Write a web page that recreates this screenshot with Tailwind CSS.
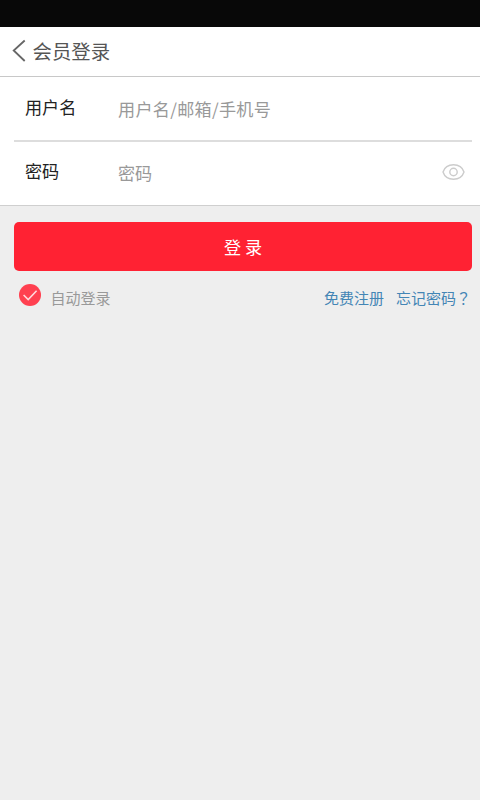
<!DOCTYPE html>
<html lang="zh-CN">
<head>
<meta charset="utf-8">
<meta name="viewport" content="width=device-width, initial-scale=1">
<title>会员登录</title>
<script src="https://cdn.jsdelivr.net/npm/@tailwindcss/browser@4"></script>
</head>
<body class="flex h-screen flex-col overflow-hidden bg-[#eeeeee] font-['Noto_Sans_CJK_SC',sans-serif]">
<div class="h-[27px] shrink-0 bg-[#080808]"></div>
<header class="flex h-[50px] shrink-0 items-center border-b border-[#c8c8c8] bg-white pl-3">
  <svg class="-mt-px h-6 w-[14px] shrink-0" viewBox="0 0 14 24" fill="none" stroke="#666666" stroke-width="1.8"><path d="M12.700 1.500 1.700 11.500l11 10.500"/></svg>
  <h1 class="-mt-px ml-[6.500px] text-[19.4px] leading-7 text-[#555555]">会员登录</h1>
</header>
<main>
  <form>
    <div class="h-[129px] border-b border-[#cfcfcf] bg-white pl-[14px] pr-2">
      <div class="flex h-[65px] border-b-2 border-[#dddddd] pl-[11px]">
        <label class="w-[93px] pt-[18px] text-[17.1px] leading-6 text-[#222222]">用户名</label>
        <span class="pt-5 text-[17.1px] leading-6 tracking-[0.3px] text-[#999999]">用户名/邮箱/手机号</span>
      </div>
      <div class="flex h-[63px] pl-[11px]">
        <label class="w-[93px] pt-[17px] text-[17.1px] leading-6 text-[#222222]">密码</label>
        <span class="pt-[19px] text-[17.1px] leading-6 text-[#999999]">密码</span>
        <svg class="ml-auto mr-[7px] mt-[22px] h-4 w-[23px]" viewBox="0 0 23 16" fill="none" stroke="#cccccc" stroke-width="1.4"><path d="M1 8C2.500 3.500 6.500 .8 11.500 .8S20.500 3.500 22 8C20.500 12.500 16.500 15.200 11.500 15.200S2.500 12.500 1 8Z"/><circle cx="11.5" cy="8" r="3.7"/></svg>
      </div>
    </div>
    <div class="pl-[14px] pr-2 pt-4">
      <button type="button" class="block h-[49px] w-full rounded-[5px] bg-[#ff2233] text-[17.1px] leading-6 text-white">登 录</button>
      <div class="flex items-start pl-[5px] pt-[13px] text-[15px] leading-5">
        <svg class="h-[22px] w-[22px]" viewBox="0 0 22 22" fill="none"><circle cx="11" cy="11" r="11" fill="#ff4050"/><path d="m4.600 11 4.600 4.500 8.400-8.700" stroke="#ffd8db" stroke-width="1.6"/></svg>
        <span class="ml-[9.500px] pt-1 text-[#999999]">自动登录</span>
        <a class="ml-auto pt-1 text-[#4385b5]">免费注册</a>
        <a class="ml-3 mr-px flex pt-1 text-[#4385b5]">忘记密码<span lang="zh-TW" class="font-['Noto_Sans_CJK_TC',sans-serif]">？</span></a>
      </div>
    </div>
  </form>
</main>
</body>
</html>
